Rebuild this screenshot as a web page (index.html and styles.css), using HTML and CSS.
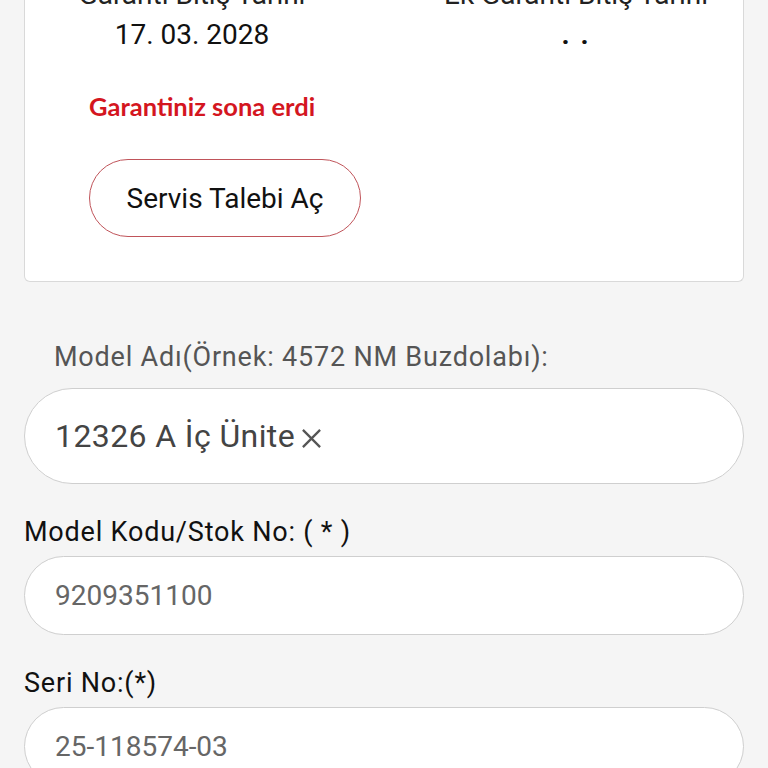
FILE: index.html
```html
<!DOCTYPE html>
<html lang="tr">
<head>
<meta charset="utf-8">
<link rel="stylesheet" href="styles.css">
</head>
<body>
<div class="page">
  <div class="card">
    <div class="dates">
      <div class="col">
        <div class="dlabel">Garanti Bitiş Tarihi</div>
        <div class="dvalue">17. 03. 2028</div>
      </div>
      <div class="col">
        <div class="dlabel">Ek Garanti Bitiş Tarihi</div>
        <div class="dvalue dots">. .</div>
      </div>
    </div>
    <div class="expired">Garantiniz sona erdi</div>
    <button class="service">Servis Talebi Aç</button>
  </div>

  <div class="field first">
    <div class="flabel indent">Model Adı(Örnek: 4572 NM Buzdolabı):</div>
    <div class="input tall"><span class="val dark">12326 A İç Ünite</span><svg class="clear" width="21" height="21" viewBox="0 0 22 22"><path d="M2 2 L20 20 M20 2 L2 20" stroke="#555" stroke-width="2.4" fill="none"/></svg></div>
  </div>
  <div class="field">
    <div class="flabel black">Model Kodu/Stok No: ( * )</div>
    <div class="input"><span class="val">9209351100</span></div>
  </div>
  <div class="field">
    <div class="flabel black">Seri No:(*)</div>
    <div class="input"><span class="val">25-118574-03</span></div>
  </div>
</div>
</body>
</html>
```
FILE: styles.css
```css
html, body {
  margin: 0;
  padding: 0;
  background: #f5f5f5;
  font-family: Roboto, "Liberation Sans", sans-serif;
  overflow: hidden;
}
.page {
  padding: 0 24px;
  margin-top: -23px;
}
.card {
  background: #fff;
  border: 1px solid #d9d9d9;
  border-top: none;
  border-radius: 0 0 6px 6px;
  padding: 0 0 44px 64px;
}
.dates {
  display: grid;
  grid-template-columns: 384px 384px;
  margin-left: -89px;
}
.col {
  text-align: center;
}
.dlabel {
  font-size: 28px;
  line-height: 36px;
  color: #222;
}
.dvalue {
  font-size: 28px;
  line-height: 36px;
  color: #111;
  margin-top: 4px;
}
.dots {
  font-weight: 700;
  letter-spacing: 2px;
}
.expired {
  margin-top: 38px;
  font-family: Lato, "Open Sans", sans-serif;
  font-weight: 700;
  font-size: 25.5px;
  line-height: 30px;
  color: #d4161f;
}
.service {
  margin-top: 38px;
  width: 272px;
  height: 78px;
  border: 1.5px solid #c0545a;
  border-radius: 40px;
  background: #fff;
  font-family: Roboto, "Liberation Sans", sans-serif;
  font-size: 28px;
  color: #111;
  padding: 0;
}
.field {
  margin-top: 31px;
}
.field.first {
  margin-top: 58px;
}
.flabel {
  font-size: 27px;
  letter-spacing: 0.8px;
  line-height: 34px;
  color: #555;
  margin-bottom: 7px;
}
.flabel.indent {
  padding-left: 30px;
  margin-bottom: 14px;
}
.flabel.black {
  color: #111;
}
.input {
  background: #fff;
  border: 1.5px solid #cfcfcf;
  border-radius: 40px;
  height: 77px;
  display: flex;
  align-items: center;
  padding-left: 30px;
}
.input.tall {
  height: 94px;
  border-radius: 48px;
}
.val {
  font-size: 28px;
  color: #666;
}
.val.dark {
  color: #444;
  font-size: 32px;
  letter-spacing: 0.4px;
}
.clear {
  margin-left: 6px;
  margin-top: 4px;
}
```
